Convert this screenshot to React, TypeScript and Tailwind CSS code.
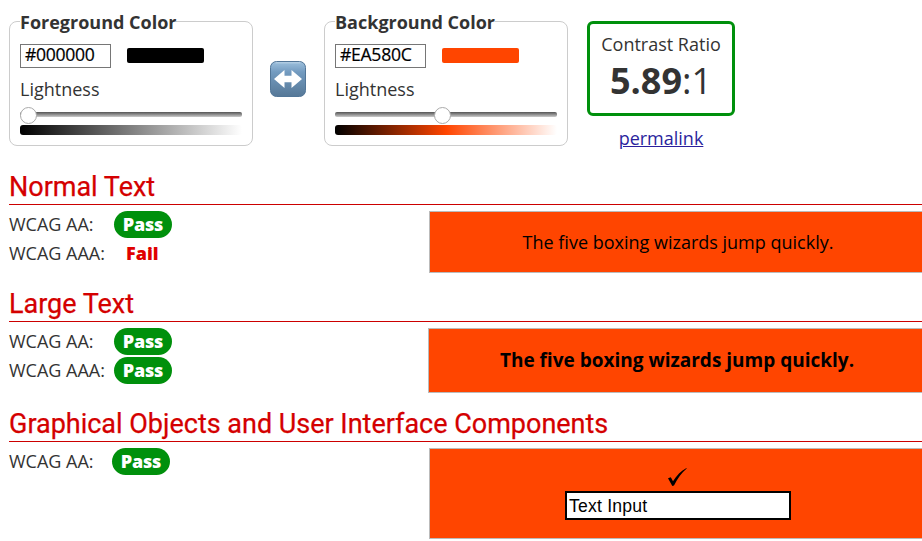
import type { ReactNode } from 'react';

type PickerProps = { label: string; value: string; swatch: string; ramp: string; thumb: string };

function ColorPicker({ label, value, swatch, ramp, thumb }: PickerProps) {
  return (
    <div className="flex h-[125px] w-[244px] flex-col items-start rounded-[8px] border border-[#ccc] pl-[10px]">
      <div className="-mt-3 h-6 bg-white text-[18px] leading-6 font-bold whitespace-nowrap">{label}</div>
      <div className="mt-[10px] flex items-start">
        <div className="h-6 w-[91px] border border-[#767676] bg-white pl-1 text-[17.6px] leading-[19px] tracking-[-0.3px] text-black [-webkit-text-stroke:0.2px_black]">{value}</div>
        <div className={`mt-1 ml-4 h-[15px] w-[77px] rounded-[2px] ${swatch}`} />
      </div>
      <div className="mt-[9px] h-6 text-[18px] leading-6">Lightness</div>
      <div className="relative mt-[11px] h-[5px] w-[222px] rounded-[2px] bg-linear-to-b from-[#555] to-[#ccc]">
        <div className={`absolute -top-[5px] size-[17px] rounded-full border border-[#aaa] bg-white ${thumb}`} />
      </div>
      <div className={`mt-2 h-[10px] w-[222px] rounded-[3px] ${ramp}`} />
    </div>
  );
}

function SwapIcon() {
  return (
    <svg width="36" height="36" viewBox="0 0 36 36">
      <defs>
        <linearGradient id="key" x1="0" y1="0" x2="0" y2="1">
          <stop offset="0" stopColor="#9dbfdb" />
          <stop offset="0.12" stopColor="#8db2d2" />
          <stop offset="0.3" stopColor="#739bc0" />
          <stop offset="1" stopColor="#567897" />
        </linearGradient>
      </defs>
      <rect x="0.5" y="0.5" width="35" height="35" rx="6" fill="url(#key)" stroke="#527698" />
      <path d="M5.5 1.8H30.5" stroke="#b9d2e6" strokeWidth="1" />
      <path d="M4 18L14.5 9V14.7H21.5V9L32 18L21.5 27V21.3H14.5V27Z" fill="#fff" />
    </svg>
  );
}

function Heading({ children }: { children: ReactNode }) {
  return (
    <h2 className="ml-[9px] h-9 border-b border-[#cc0000] font-[Roboto,sans-serif] text-[27px] leading-9 tracking-[-0.01px] whitespace-nowrap text-[#d40000] [-webkit-text-stroke:0.25px_#d40000]">
      {children}
    </h2>
  );
}

function Pill() {
  return (
    <span className="flex h-[27px] w-[58px] items-center justify-center rounded-full bg-[#00900c] text-[18px] font-extrabold tracking-[-0.2px] text-white">
      Pass
    </span>
  );
}

function Result({ level, wide = true, children }: { level: string; wide?: boolean; children: ReactNode }) {
  return (
    <div className="flex h-[27px] items-center text-[18px]">
      <span className={wide ? 'w-[105px] whitespace-nowrap' : 'w-[103px] whitespace-nowrap'}>{level}</span>
      {children}
    </div>
  );
}

export default function App() {
  return (
    <main className="h-[541px] w-[922px] overflow-hidden bg-white pt-[21px] font-['Open_Sans',sans-serif] text-[#333]">
      <div className="flex h-[148px] items-start pl-[9px]">
        <ColorPicker label="Foreground Color" value="#000000" swatch="bg-black" ramp="bg-linear-to-r/srgb from-black to-white" thumb="left-0" />
        <div className="mt-10 mr-[18px] ml-[17px]"><SwapIcon /></div>
        <ColorPicker label="Background Color" value="#EA580C" swatch="bg-[#ff4500]" ramp="bg-linear-to-r/srgb from-black via-[#ff4500] to-white" thumb="left-[98.5px]" />
        <div className="ml-[19px] flex w-[148px] flex-col items-center">
          <div className="flex h-[95px] w-full flex-col items-center rounded-[6px] border-3 border-[#00900c]">
            <div className="mt-2 h-6 text-[18px] leading-6 whitespace-nowrap">Contrast Ratio</div>
            <div className="mt-px h-12 text-[36px] leading-[48px]"><b>5.89</b>:1</div>
          </div>
          <a className="mt-[10px] h-6 text-[18px] leading-6 text-[#2a1f9d] underline">permalink</a>
        </div>
      </div>

      <Heading>Normal Text</Heading>
      <div className="mt-[6px] flex h-[75px] justify-between">
        <div className="flex flex-col gap-[2px] pl-[9px]">
          <Result level="WCAG AA:"><Pill /></Result>
          <Result level="WCAG AAA:"><span className="ml-3 font-extrabold text-[#e00000]">Fail</span></Result>
        </div>
        <div className="-mr-[5px] flex h-[62px] w-[498px] items-center justify-center border border-[#bbb] bg-[#ff4500] text-[18px] text-black">
          The five boxing wizards jump quickly.
        </div>
      </div>

      <Heading>Large Text</Heading>
      <div className="mt-[6px] flex h-[78px] justify-between">
        <div className="flex flex-col gap-[2px] pl-[9px]">
          <Result level="WCAG AA:"><Pill /></Result>
          <Result level="WCAG AAA:"><Pill /></Result>
        </div>
        <div className="-mr-[5px] flex h-[65px] w-[499px] items-center justify-center border border-[#bbb] bg-[#ff4500] pr-px text-[19px] font-bold text-black">
          The five boxing wizards jump quickly.
        </div>
      </div>

      <Heading>Graphical Objects and User Interface Components</Heading>
      <div className="mt-[6px] flex justify-between">
        <div className="pl-[9px]">
          <Result level="WCAG AA:" wide={false}><Pill /></Result>
        </div>
        <div className="-mr-[5px] flex h-[91px] w-[498px] flex-col items-center border border-[#bbb] bg-[#ff4500] text-black">
          <svg className="mt-[19px] mr-[2px]" width="20" height="19" viewBox="0 0 20 19">
            <path d="M1 10.2L3.8 9.2L6 13.2C9.5 7.5 14 3 19.5 0L19.7 0.5C14.5 5 10.5 10.3 7 17.6L5.3 18Z" fill="#000" />
          </svg>
          <div className="mt-1 h-[29px] w-[226px] border-2 border-black bg-white pl-[2px] font-['Liberation_Sans',sans-serif] text-[17.6px] leading-[26px] tracking-[0.2px]">
            Text Input
          </div>
        </div>
      </div>
    </main>
  );
}
